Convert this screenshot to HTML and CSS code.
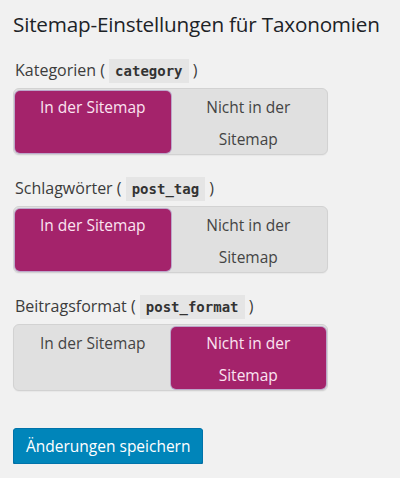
FILE: index.html
```html
<!DOCTYPE html>
<html lang="de">
<head>
<meta charset="utf-8">
<link rel="stylesheet" href="styles.css">
</head>
<body>
<div class="page">
  <h2 class="title">Sitemap-Einstellungen für Taxonomien</h2>

  <div class="field">
    <div class="label">Kategorien ( <code class="code">category</code> )</div>
    <div class="toggle">
      <div class="opt on">In der Sitemap</div>
      <div class="opt">Nicht in der Sitemap</div>
    </div>
  </div>

  <div class="field">
    <div class="label">Schlagwörter ( <code class="code">post_tag</code> )</div>
    <div class="toggle">
      <div class="opt on">In der Sitemap</div>
      <div class="opt">Nicht in der Sitemap</div>
    </div>
  </div>

  <div class="field">
    <div class="label">Beitragsformat ( <code class="code">post_format</code> )</div>
    <div class="toggle">
      <div class="opt">In der Sitemap</div>
      <div class="opt on">Nicht in der Sitemap</div>
    </div>
  </div>

  <div class="actions">
    <button class="save">Änderungen speichern</button>
  </div>
</div>
</body>
</html>
```

FILE: styles.css
```css
html, body {
  margin: 0;
  padding: 0;
  background: #f1f1f1;
}
.page {
  padding: 10px 13px 0 13px;
  font-family: "Open Sans", "Noto Sans", sans-serif;
  color: #23282d;
}
.title {
  margin: 0 0 20px 0;
  font-size: 20.7px;
  font-weight: 500;
  line-height: 28px;
  color: #1d2327;
  letter-spacing: -0.2px;
}
.field {
  margin-bottom: 21px;
}
.label {
  font-size: 16px;
  line-height: 24px;
  color: #3c3c3c;
  margin: 0 0 5px 2px;
}
.code {
  font-family: "DejaVu Sans Mono", "Liberation Mono", monospace;
  font-weight: bold;
  font-size: 14px;
  background: #e5e5e5;
  color: #333;
  padding: 4px 6px;
}
.toggle {
  width: 315px;
  height: 67px;
  box-sizing: border-box;
  border: 1px solid #d2d2d2;
  border-radius: 6px;
  background: #e0e0e0;
  padding: 2px 1px 1px 1px;
  display: flex;
  box-shadow: 0 1px 1px rgba(0,0,0,0.04);
}
.opt {
  flex: 1;
  text-align: center;
  font-size: 15.5px;
  line-height: 32px;
  color: #444;
  border-radius: 5px;
  padding: 0 18px;
}
.opt.on {
  background: #a4236b;
  color: #fbe3f1;
  box-shadow: 0 0 0 1px rgba(120, 60, 160, 0.35);
}
.actions {
  padding-top: 16px;
}
.save {
  font-family: "Open Sans", "Noto Sans", sans-serif;
  font-size: 15.5px;
  color: #fff;
  background: #0085ba;
  border: 1px solid #0073aa;
  border-radius: 3px;
  height: 36px;
  padding: 0 12px;
  box-shadow: 0 1px 0 #006799;
  margin: 0;
}
```
